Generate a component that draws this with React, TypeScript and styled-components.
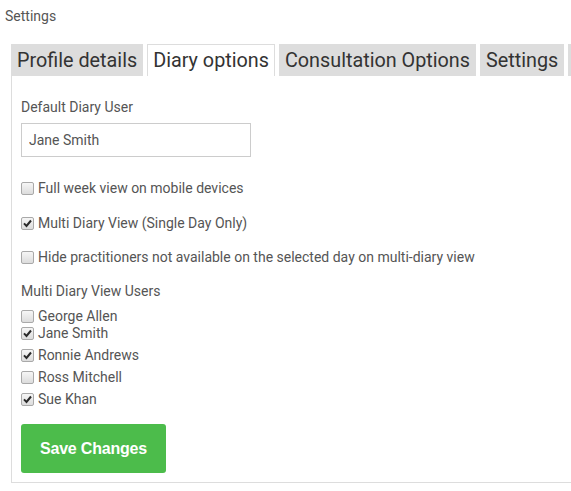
import React from 'react'
import styled, { createGlobalStyle } from 'styled-components'

const GlobalStyle = createGlobalStyle`
    body {
        margin: 0;
        background: #fff;
        font-family: Roboto, "Liberation Sans", Arial, sans-serif;
        color: #555;
        overflow: hidden;
    }
`;

const Page = styled.div`
    width: 571px;
    overflow: hidden;
`;

const Heading = styled.div`
    padding: 8px 5px 0;
    font-size: 14px;
    line-height: 16px;
    color: #555;
`;

const TabRow = styled.div`
    display: flex;
    flex-wrap: nowrap;
    gap: 4px;
    margin: 20px 0 0 11px;
    height: 32px;
`;

const Tab = styled.div<{ $active?: boolean }>`
    flex: none;
    box-sizing: border-box;
    height: 32px;
    min-width: 20px;
    padding: 0 5px;
    font-size: 19.8px;
    line-height: 31px;
    color: #333;
    white-space: nowrap;
    background: ${p => (p.$active ? '#fff' : '#dddddd')};
    border: 1px solid ${p => (p.$active ? '#dddddd' : 'transparent')};
    border-bottom: none;
`;

const Panel = styled.div`
    margin-left: 11px;
    border-left: 1px solid #dddddd;
    border-bottom: 1px solid #dddddd;
    padding: 21px 0 9px 9px;
`;

const Label = styled.div<{ $gap?: number }>`
    margin-top: ${p => p.$gap ?? 0}px;
    font-size: 14px;
    line-height: 20px;
    color: #555;
`;

const TextInput = styled.input`
    display: block;
    box-sizing: border-box;
    width: 230px;
    height: 34px;
    margin-top: 6px;
    padding: 0 7px;
    border: 1px solid #cccccc;
    font-family: inherit;
    font-size: 14px;
    color: #555;
    outline: none;
`;

const OptionRow = styled.label<{ $gap: number }>`
    display: flex;
    align-items: center;
    gap: 4px;
    margin-top: ${p => p.$gap}px;
    font-size: 14px;
    line-height: 20px;
    color: #555;
`;

const UserRow = styled.label<{ $gap: number }>`
    display: flex;
    align-items: center;
    gap: 4px;
    margin-top: ${p => p.$gap}px;
    font-size: 14px;
    line-height: 18px;
    color: #555;
`;

const Box = styled.span`
    flex: none;
    box-sizing: border-box;
    width: 13px;
    height: 13px;
    border: 1px solid #a9a9a9;
    border-radius: 2px;
    background: linear-gradient(#f6f6f6, #dcdcdc);
    display: flex;
    align-items: center;
    justify-content: center;
`;

const SaveButton = styled.button`
    display: block;
    margin-top: 16px;
    width: 145px;
    height: 49px;
    border: none;
    border-radius: 3px;
    background: #4cbc4b;
    color: #fff;
    font-family: "Liberation Sans", Arial, sans-serif;
    font-weight: bold;
    font-size: 16px;
    letter-spacing: -0.2px;
`;

function Check({ checked }: { checked: boolean }) {
    return (
        <Box>
            {checked && (
                <svg width="9" height="9" viewBox="0 0 9 9">
                    <path d="M1 4.4 L3.5 7 L8 1.5" fill="none" stroke="#2a2a2a" strokeWidth="2" />
                </svg>
            )}
        </Box>
    )
}

const tabs = ['Profile details', 'Diary options', 'Consultation Options', 'Settings', '']

const users = [
    { name: 'George Allen', checked: false, gap: 6 },
    { name: 'Jane Smith', checked: true, gap: -1 },
    { name: 'Ronnie Andrews', checked: true, gap: 4 },
    { name: 'Ross Mitchell', checked: false, gap: 4 },
    { name: 'Sue Khan', checked: true, gap: 4 },
]

export default function App() {
    return (
        <Page>
            <GlobalStyle />
            <Heading>Settings</Heading>
            <TabRow>
                {tabs.map((t, i) => (
                    <Tab key={i} $active={t === 'Diary options'}>{t}</Tab>
                ))}
            </TabRow>
            <Panel>
                <Label>Default Diary User</Label>
                <TextInput defaultValue="Jane Smith" />
                <OptionRow $gap={21}>
                    <Check checked={false} />
                    Full week view on mobile devices
                </OptionRow>
                <OptionRow $gap={15}>
                    <Check checked={true} />
                    Multi Diary View (Single Day Only)
                </OptionRow>
                <OptionRow $gap={14}>
                    <Check checked={false} />
                    Hide practitioners not available on the selected day on multi-diary view
                </OptionRow>
                <Label $gap={14}>Multi Diary View Users</Label>
                {users.map(u => (
                    <UserRow key={u.name} $gap={u.gap}>
                        <Check checked={u.checked} />
                        {u.name}
                    </UserRow>
                ))}
                <SaveButton>Save Changes</SaveButton>
            </Panel>
        </Page>
    )
}
